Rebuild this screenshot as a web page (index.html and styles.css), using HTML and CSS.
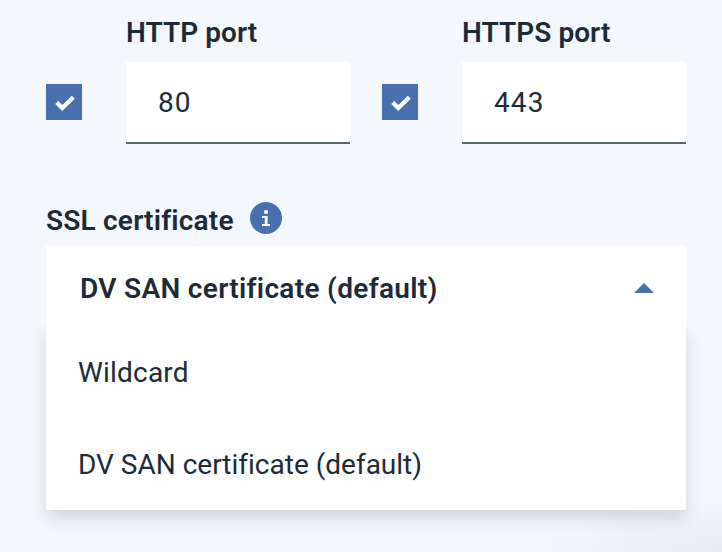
FILE: index.html
```html
<!DOCTYPE html>
<html lang="en">
<head>
<meta charset="utf-8">
<title>Origin settings</title>
<link rel="stylesheet" href="styles.css">
</head>
<body>
<main class="form">
  <div class="ports">
    <div class="port">
      <span class="checkbox"><svg viewBox="0 0 36 36"><path d="M10.7 18.5l5.6 5.5L27.3 13.3" /></svg></span>
      <label class="field"><span class="label">HTTP port</span><span class="input">80</span></label>
    </div>
    <div class="port">
      <span class="checkbox"><svg viewBox="0 0 36 36"><path d="M10.7 18.5l5.6 5.5L27.3 13.3" /></svg></span>
      <label class="field"><span class="label">HTTPS port</span><span class="input">443</span></label>
    </div>
  </div>
  <div class="cert-label"><span class="cert-text">SSL certificate</span>
    <svg class="info" viewBox="0 0 32 32"><circle class="disc" cx="16" cy="16" r="16"/><circle cx="16" cy="10" r="2.1"/><path d="M12 14h5.6v8H20v2h-8v-2h2.8v-6H12z"/></svg>
  </div>
  <div class="select">
    <div class="selected">DV SAN certificate (default)<svg class="caret" viewBox="0 0 20 10"><path d="M0 10L10 0l10 10z"/></svg></div>
    <div class="menu">
      <div class="option">Wildcard</div>
      <div class="option">DV SAN certificate (default)</div>
    </div>
  </div>
</main>
<div class="floating-shade"></div>
</body>
</html>
```
FILE: styles.css
```css
* { box-sizing: border-box; }
body {
  position: relative;
  margin: 0;
  width: 722px;
  height: 552px;
  overflow: hidden;
  background: #f4f7fc;
  color: #1d2b38;
  font-family: Roboto, "Liberation Sans", sans-serif;
  font-size: 28px;
  font-weight: 400;
  font-variant-ligatures: none;
  line-height: 36px;
}
.form { padding: 15px 36px 0 46px; }
.ports { display: flex; gap: 32px; }
.port { display: flex; align-items: flex-end; gap: 44px; width: 304px; }
.checkbox { width: 36px; height: 36px; margin-bottom: 24px; background: #4870ae; }
.checkbox svg { display: block; fill: none; stroke: #fff; stroke-width: 4.2; }
.field { width: 224px; }
.label { display: block; height: 47px; font-weight: 600; letter-spacing: .05px; white-space: nowrap; }
.input {
  display: flex;
  align-items: center;
  height: 82px;
  padding: 2px 32px 0;
  background: #fff;
  border-bottom: 2px solid #5a6872;
  letter-spacing: 1.1px;
}
.cert-label { display: flex; gap: 16px; height: 44px; margin-top: 58px; font-weight: 600; white-space: nowrap; }
.cert-text { width: 188px; padding-top: 1px; letter-spacing: .2px; }
.info { width: 32px; height: 32px; fill: #fff; }
.disc { fill: #4870ae; }
.selected {
  display: flex;
  align-items: center;
  justify-content: space-between;
  height: 80px;
  padding: 6px 32px 0 34px;
  background: #fff;
  font-weight: 600;
  letter-spacing: .32px;
  white-space: nowrap;
}
.caret { width: 20px; height: 10px; margin-top: -2px; fill: #4870ae; }
.menu {
  height: 184px;
  background: #fefefe;
  box-shadow: 0 8px 16px rgba(0, 0, 0, .14);
  clip-path: inset(0 -40px -40px -40px);
}
.option {
  display: flex;
  align-items: center;
  height: 92px;
  padding: 2px 32px 0;
  white-space: nowrap;
}
.option:first-child { letter-spacing: .2px; }
.floating-shade {
  position: absolute;
  right: 0;
  bottom: 0;
  width: 200px;
  height: 56px;
  background: radial-gradient(ellipse 190px 56px at 100% 100%, rgba(0, 0, 0, .05), rgba(0, 0, 0, .03) 45%, transparent);
}
```
